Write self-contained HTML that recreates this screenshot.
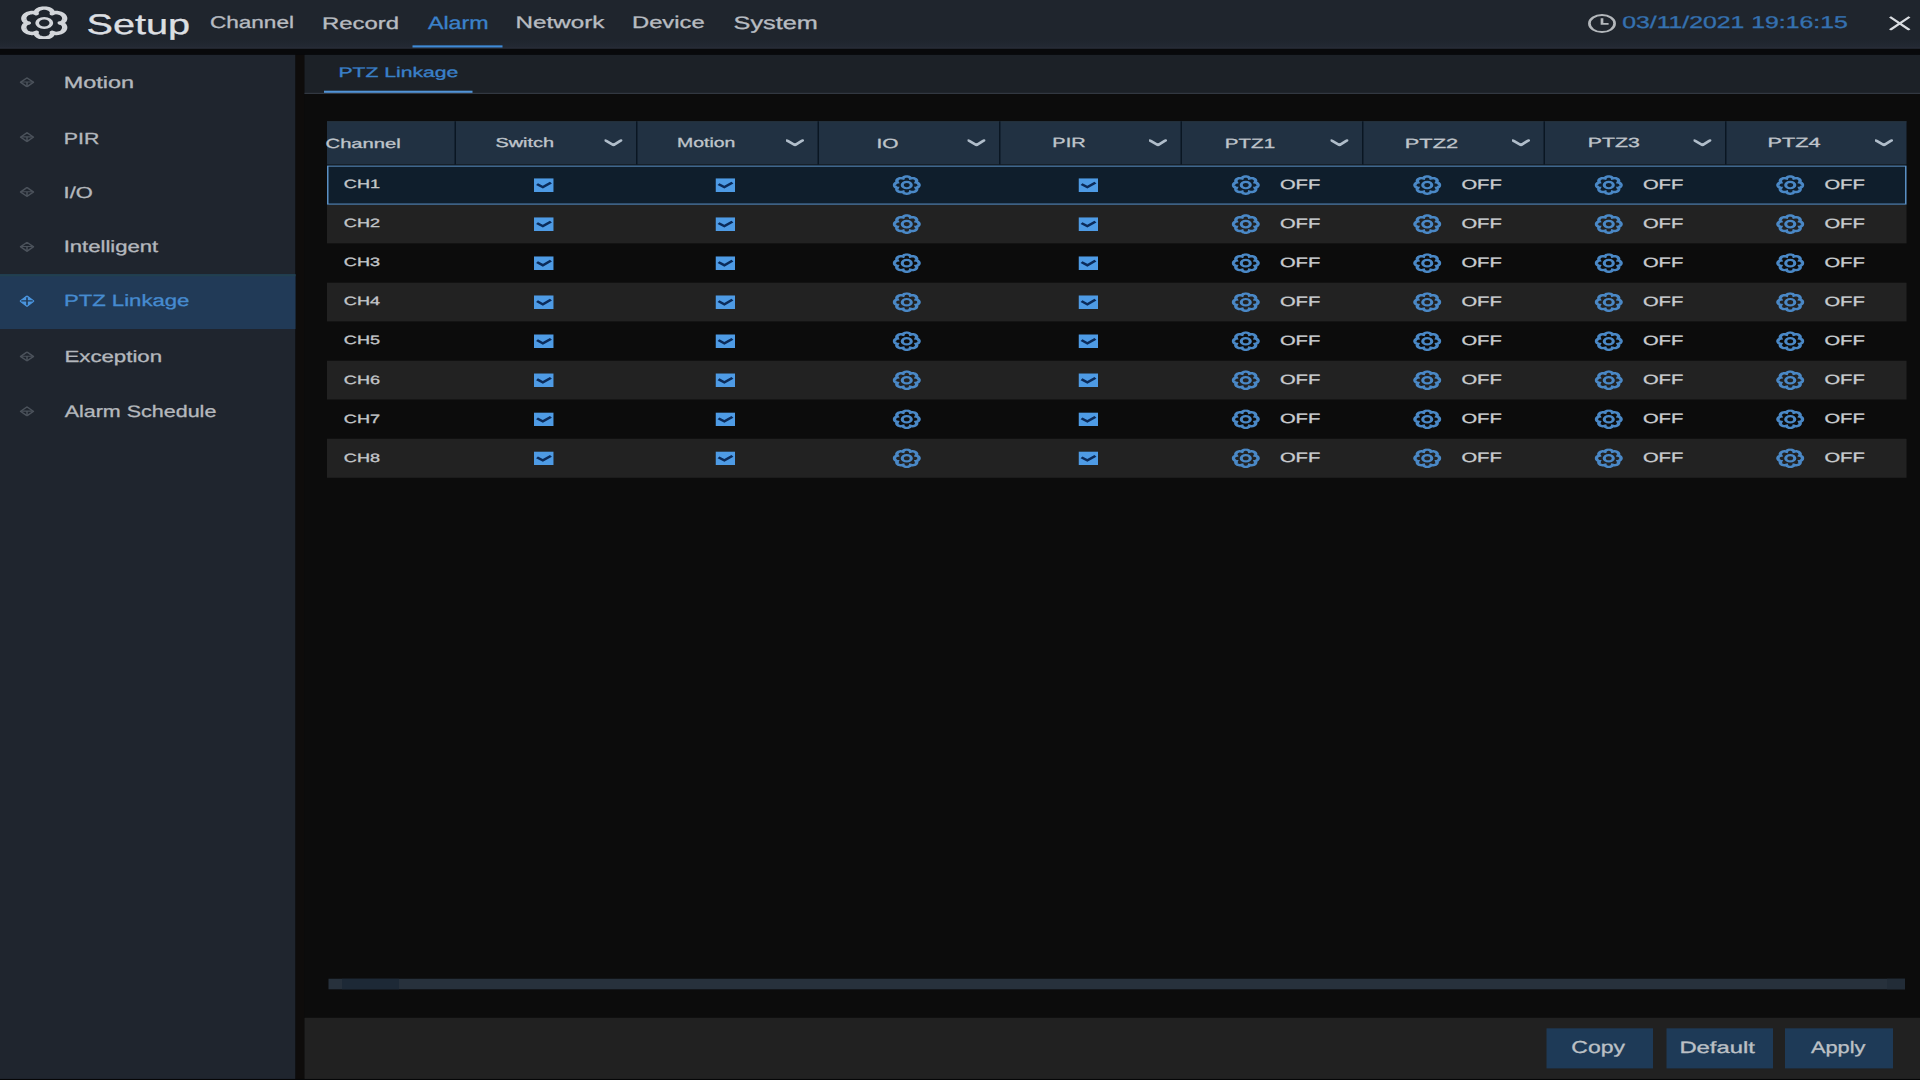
<!DOCTYPE html><html><head><meta charset="utf-8"><style>
html,body{margin:0;padding:0;width:1920px;height:1080px;overflow:hidden;background:#08090b;}
#root{position:absolute;left:0;top:0;width:1280px;height:1024px;transform:scale(1.5,1.0546875);transform-origin:0 0;font-family:"Liberation Sans",sans-serif;background:#08090b;overflow:hidden;}
.a{position:absolute;}
.t{position:absolute;white-space:nowrap;line-height:1;-webkit-text-stroke:0.3px currentColor;transform-origin:0 0;text-rendering:geometricPrecision;}
</style></head><body><svg width="0" height="0" style="position:absolute"><defs><path id="tg" d="M17.70,9.50 L17.69,9.79 L17.64,10.07 L17.57,10.35 L17.46,10.62 L17.33,10.88 L17.16,11.13 L16.97,11.36 L16.74,11.58 L16.48,11.77 L16.17,11.93 L15.74,12.02 L15.84,12.32 L15.99,12.67 L16.07,12.99 L16.10,13.31 L16.09,13.62 L16.05,13.91 L15.97,14.20 L15.87,14.47 L15.73,14.73 L15.58,14.97 L15.40,15.19 L15.19,15.40 L14.97,15.58 L14.73,15.73 L14.47,15.87 L14.20,15.97 L13.91,16.05 L13.62,16.09 L13.31,16.10 L12.99,16.07 L12.67,15.99 L12.32,15.84 L12.02,15.74 L11.93,16.17 L11.77,16.48 L11.58,16.74 L11.36,16.97 L11.13,17.16 L10.88,17.33 L10.62,17.46 L10.35,17.57 L10.07,17.64 L9.79,17.69 L9.50,17.70 L9.21,17.69 L8.93,17.64 L8.65,17.57 L8.38,17.46 L8.12,17.33 L7.87,17.16 L7.64,16.97 L7.42,16.74 L7.23,16.48 L7.07,16.17 L6.98,15.74 L6.68,15.84 L6.33,15.99 L6.01,16.07 L5.69,16.10 L5.38,16.09 L5.09,16.05 L4.80,15.97 L4.53,15.87 L4.27,15.73 L4.03,15.58 L3.81,15.40 L3.60,15.19 L3.42,14.97 L3.27,14.73 L3.13,14.47 L3.03,14.20 L2.95,13.91 L2.91,13.62 L2.90,13.31 L2.93,12.99 L3.01,12.67 L3.16,12.32 L3.26,12.02 L2.83,11.93 L2.52,11.77 L2.26,11.58 L2.03,11.36 L1.84,11.13 L1.67,10.88 L1.54,10.62 L1.43,10.35 L1.36,10.07 L1.31,9.79 L1.30,9.50 L1.31,9.21 L1.36,8.93 L1.43,8.65 L1.54,8.38 L1.67,8.12 L1.84,7.87 L2.03,7.64 L2.26,7.42 L2.52,7.23 L2.83,7.07 L3.26,6.98 L3.16,6.68 L3.01,6.33 L2.93,6.01 L2.90,5.69 L2.91,5.38 L2.95,5.09 L3.03,4.80 L3.13,4.53 L3.27,4.27 L3.42,4.03 L3.60,3.81 L3.81,3.60 L4.03,3.42 L4.27,3.27 L4.53,3.13 L4.80,3.03 L5.09,2.95 L5.38,2.91 L5.69,2.90 L6.01,2.93 L6.33,3.01 L6.68,3.16 L6.98,3.26 L7.07,2.83 L7.23,2.52 L7.42,2.26 L7.64,2.03 L7.87,1.84 L8.12,1.67 L8.38,1.54 L8.65,1.43 L8.93,1.36 L9.21,1.31 L9.50,1.30 L9.79,1.31 L10.07,1.36 L10.35,1.43 L10.62,1.54 L10.88,1.67 L11.13,1.84 L11.36,2.03 L11.58,2.26 L11.77,2.52 L11.93,2.83 L12.02,3.26 L12.32,3.16 L12.67,3.01 L12.99,2.93 L13.31,2.90 L13.62,2.91 L13.91,2.95 L14.20,3.03 L14.47,3.13 L14.73,3.27 L14.97,3.42 L15.19,3.60 L15.40,3.81 L15.58,4.03 L15.73,4.27 L15.87,4.53 L15.97,4.80 L16.05,5.09 L16.09,5.38 L16.10,5.69 L16.07,6.01 L15.99,6.33 L15.84,6.68 L15.74,6.98 L16.17,7.07 L16.48,7.23 L16.74,7.42 L16.97,7.64 L17.16,7.87 L17.33,8.12 L17.46,8.38 L17.57,8.65 L17.64,8.93 L17.69,9.21Z"/><path id="hg" d="M26.30,16.00 L27.35,16.40 L27.87,16.83 L28.26,17.29 L28.57,17.77 L28.81,18.26 L28.99,18.76 L29.12,19.27 L29.20,19.78 L29.23,20.30 L29.21,20.81 L29.15,21.31 L29.04,21.81 L28.89,22.29 L28.70,22.75 L28.47,23.20 L28.20,23.62 L27.89,24.02 L27.55,24.39 L27.18,24.73 L26.77,25.04 L26.34,25.31 L25.88,25.54 L25.39,25.73 L24.89,25.87 L24.36,25.96 L23.81,26.00 L23.25,25.97 L22.65,25.86 L22.02,25.63 L21.15,24.92 L21.33,26.03 L21.22,26.69 L21.01,27.26 L20.75,27.77 L20.45,28.22 L20.10,28.63 L19.73,29.00 L19.32,29.32 L18.89,29.61 L18.44,29.85 L17.97,30.05 L17.49,30.20 L17.00,30.31 L16.50,30.38 L16.00,30.40 L15.50,30.38 L15.00,30.31 L14.51,30.20 L14.03,30.05 L13.56,29.85 L13.11,29.61 L12.68,29.32 L12.27,29.00 L11.90,28.63 L11.55,28.22 L11.25,27.77 L10.99,27.26 L10.78,26.69 L10.67,26.03 L10.85,24.92 L9.98,25.63 L9.35,25.86 L8.75,25.97 L8.19,26.00 L7.64,25.96 L7.11,25.87 L6.61,25.73 L6.12,25.54 L5.66,25.31 L5.23,25.04 L4.82,24.73 L4.45,24.39 L4.11,24.02 L3.80,23.62 L3.53,23.20 L3.30,22.75 L3.11,22.29 L2.96,21.81 L2.85,21.31 L2.79,20.81 L2.77,20.30 L2.80,19.78 L2.88,19.27 L3.01,18.76 L3.19,18.26 L3.43,17.77 L3.74,17.29 L4.13,16.83 L4.65,16.40 L5.70,16.00 L4.65,15.60 L4.13,15.17 L3.74,14.71 L3.43,14.23 L3.19,13.74 L3.01,13.24 L2.88,12.73 L2.80,12.22 L2.77,11.70 L2.79,11.19 L2.85,10.69 L2.96,10.19 L3.11,9.71 L3.30,9.25 L3.53,8.80 L3.80,8.38 L4.11,7.98 L4.45,7.61 L4.82,7.27 L5.23,6.96 L5.66,6.69 L6.12,6.46 L6.61,6.27 L7.11,6.13 L7.64,6.04 L8.19,6.00 L8.75,6.03 L9.35,6.14 L9.98,6.37 L10.85,7.08 L10.67,5.97 L10.78,5.31 L10.99,4.74 L11.25,4.23 L11.55,3.78 L11.90,3.37 L12.27,3.00 L12.68,2.68 L13.11,2.39 L13.56,2.15 L14.03,1.95 L14.51,1.80 L15.00,1.69 L15.50,1.62 L16.00,1.60 L16.50,1.62 L17.00,1.69 L17.49,1.80 L17.97,1.95 L18.44,2.15 L18.89,2.39 L19.32,2.68 L19.73,3.00 L20.10,3.37 L20.45,3.78 L20.75,4.23 L21.01,4.74 L21.22,5.31 L21.33,5.97 L21.15,7.08 L22.02,6.37 L22.65,6.14 L23.25,6.03 L23.81,6.00 L24.36,6.04 L24.89,6.13 L25.39,6.27 L25.88,6.46 L26.34,6.69 L26.77,6.96 L27.18,7.27 L27.55,7.61 L27.89,7.98 L28.20,8.38 L28.47,8.80 L28.70,9.25 L28.89,9.71 L29.04,10.19 L29.15,10.69 L29.21,11.19 L29.23,11.70 L29.20,12.22 L29.12,12.73 L28.99,13.24 L28.81,13.74 L28.57,14.23 L28.26,14.71 L27.87,15.17 L27.35,15.60Z"/></defs></svg><div id="root">
<div class="a" style="left:0;top:0;width:1280px;height:46px;background:linear-gradient(#1f252d 0%,#1f252d 80%,#232934 100%)"></div>
<div class="a" style="left:0;top:44.6px;width:1280px;height:1.2px;background:#2b2f3a"></div>
<svg class="a" style="left:12.9px;top:5.9px" width="33" height="31.6" viewBox="0 0 32 32" preserveAspectRatio="none"><use href="#hg" fill="none" stroke="#d3d6da" stroke-width="3.4" stroke-linejoin="round"/><circle cx="16" cy="16" r="4.6" fill="none" stroke="#d3d6da" stroke-width="2.4"/></svg>
<div class="a" style="left:275px;top:42.5px;width:59.5px;height:2.6px;background:#3f8bd8"></div>
<svg class="a" style="left:1058px;top:13px" width="20" height="19" viewBox="0 0 20 19"><ellipse cx="10" cy="9.3" rx="8.4" ry="8.1" fill="none" stroke="#b3b7bb" stroke-width="1.8"/><path d="M10 4.3 V9.6 H14.4" fill="none" stroke="#b3b7bb" stroke-width="1.8"/></svg>
<svg class="a" style="left:1259px;top:14.5px" width="15" height="14.5" viewBox="0 0 15 14.5"><path d="M1 1 L14 13.5 M14 1 L1 13.5" stroke="#d9dce0" stroke-width="1.9"/></svg>
<div class="a" style="left:0;top:52px;width:197px;height:972px;background:#1f252e"></div>
<div class="a" style="left:197px;top:52px;width:5.7px;height:972px;background:#0e0c0b"></div>
<svg class="a" style="left:12.5px;top:72.5px" width="10" height="10" viewBox="0 0 10 10"><path d="M5 0.8 L9.3 5 L5 9.2 L0.7 5Z" fill="none" stroke="#4b525b" stroke-width="1.2" stroke-linejoin="round"/><path d="M1.2 4.8 H8.8 M5 4.8 V8.8" stroke="#4b525b" stroke-width="1"/></svg>
<svg class="a" style="left:12.5px;top:124.5px" width="10" height="10" viewBox="0 0 10 10"><path d="M5 0.8 L9.3 5 L5 9.2 L0.7 5Z" fill="none" stroke="#4b525b" stroke-width="1.2" stroke-linejoin="round"/><path d="M1.2 4.8 H8.8 M5 4.8 V8.8" stroke="#4b525b" stroke-width="1"/></svg>
<svg class="a" style="left:12.5px;top:176.5px" width="10" height="10" viewBox="0 0 10 10"><path d="M5 0.8 L9.3 5 L5 9.2 L0.7 5Z" fill="none" stroke="#4b525b" stroke-width="1.2" stroke-linejoin="round"/><path d="M1.2 4.8 H8.8 M5 4.8 V8.8" stroke="#4b525b" stroke-width="1"/></svg>
<svg class="a" style="left:12.5px;top:228.5px" width="10" height="10" viewBox="0 0 10 10"><path d="M5 0.8 L9.3 5 L5 9.2 L0.7 5Z" fill="none" stroke="#4b525b" stroke-width="1.2" stroke-linejoin="round"/><path d="M1.2 4.8 H8.8 M5 4.8 V8.8" stroke="#4b525b" stroke-width="1"/></svg>
<div class="a" style="left:0;top:260px;width:197px;height:52px;background:#213a57"></div>
<div class="a" style="left:0;top:260px;width:197px;height:1.5px;background:#22404f"></div>
<svg class="a" style="left:12.9px;top:279.5px" width="10" height="11" viewBox="0 0 10 11"><path d="M5 0.5 L9.6 5.5 L5 10.5 L0.4 5.5Z" fill="#4a95df" stroke="#4a95df" stroke-width="0.8" stroke-linejoin="round"/><path d="M1.2 5.2 H8.8 M5 1.8 V9.5" stroke="#213a57" stroke-width="1.1"/></svg>
<svg class="a" style="left:12.5px;top:332.5px" width="10" height="10" viewBox="0 0 10 10"><path d="M5 0.8 L9.3 5 L5 9.2 L0.7 5Z" fill="none" stroke="#4b525b" stroke-width="1.2" stroke-linejoin="round"/><path d="M1.2 4.8 H8.8 M5 4.8 V8.8" stroke="#4b525b" stroke-width="1"/></svg>
<svg class="a" style="left:12.5px;top:384.5px" width="10" height="10" viewBox="0 0 10 10"><path d="M5 0.8 L9.3 5 L5 9.2 L0.7 5Z" fill="none" stroke="#4b525b" stroke-width="1.2" stroke-linejoin="round"/><path d="M1.2 4.8 H8.8 M5 4.8 V8.8" stroke="#4b525b" stroke-width="1"/></svg>
<div class="a" style="left:202.7px;top:52px;width:1077.3px;height:972px;background:#0c0c0c"></div>
<div class="a" style="left:202.7px;top:52px;width:1077.3px;height:36.5px;background:#1c2127"></div>
<div class="a" style="left:202.7px;top:87.9px;width:1077.3px;height:1.3px;background:#363d47"></div>
<div class="a" style="left:216px;top:85.8px;width:98.8px;height:2.4px;background:#5294d6"></div>
<div class="a" style="left:218px;top:114.6px;width:1053.3px;height:41.9px;background:#213142"></div>
<div class="a" style="left:218px;top:114.6px;width:1053.3px;height:1.2px;background:#263440"></div>
<div class="a" style="left:302.6px;top:114.6px;width:1.3px;height:41.9px;background:#0a1622"></div>
<svg class="a" style="left:402.9px;top:132.2px" width="12" height="7" viewBox="0 0 12 7"><path d="M0.6 1.1 L6.0 5.6 L11.0 1.0" fill="none" stroke="#b0bdca" stroke-width="2.3" stroke-linejoin="round" stroke-linecap="round"/></svg>
<div class="a" style="left:423.6px;top:114.6px;width:1.3px;height:41.9px;background:#0a1622"></div>
<svg class="a" style="left:523.9px;top:132.2px" width="12" height="7" viewBox="0 0 12 7"><path d="M0.6 1.1 L6.0 5.6 L11.0 1.0" fill="none" stroke="#b0bdca" stroke-width="2.3" stroke-linejoin="round" stroke-linecap="round"/></svg>
<div class="a" style="left:544.6px;top:114.6px;width:1.3px;height:41.9px;background:#0a1622"></div>
<svg class="a" style="left:644.9px;top:132.2px" width="12" height="7" viewBox="0 0 12 7"><path d="M0.6 1.1 L6.0 5.6 L11.0 1.0" fill="none" stroke="#b0bdca" stroke-width="2.3" stroke-linejoin="round" stroke-linecap="round"/></svg>
<div class="a" style="left:665.6px;top:114.6px;width:1.3px;height:41.9px;background:#0a1622"></div>
<svg class="a" style="left:765.9px;top:132.2px" width="12" height="7" viewBox="0 0 12 7"><path d="M0.6 1.1 L6.0 5.6 L11.0 1.0" fill="none" stroke="#b0bdca" stroke-width="2.3" stroke-linejoin="round" stroke-linecap="round"/></svg>
<div class="a" style="left:786.6px;top:114.6px;width:1.3px;height:41.9px;background:#0a1622"></div>
<svg class="a" style="left:886.9px;top:132.2px" width="12" height="7" viewBox="0 0 12 7"><path d="M0.6 1.1 L6.0 5.6 L11.0 1.0" fill="none" stroke="#b0bdca" stroke-width="2.3" stroke-linejoin="round" stroke-linecap="round"/></svg>
<div class="a" style="left:907.6px;top:114.6px;width:1.3px;height:41.9px;background:#0a1622"></div>
<svg class="a" style="left:1007.9px;top:132.2px" width="12" height="7" viewBox="0 0 12 7"><path d="M0.6 1.1 L6.0 5.6 L11.0 1.0" fill="none" stroke="#b0bdca" stroke-width="2.3" stroke-linejoin="round" stroke-linecap="round"/></svg>
<div class="a" style="left:1028.6px;top:114.6px;width:1.3px;height:41.9px;background:#0a1622"></div>
<svg class="a" style="left:1128.9px;top:132.2px" width="12" height="7" viewBox="0 0 12 7"><path d="M0.6 1.1 L6.0 5.6 L11.0 1.0" fill="none" stroke="#b0bdca" stroke-width="2.3" stroke-linejoin="round" stroke-linecap="round"/></svg>
<div class="a" style="left:1149.6px;top:114.6px;width:1.3px;height:41.9px;background:#0a1622"></div>
<svg class="a" style="left:1249.9px;top:132.2px" width="12" height="7" viewBox="0 0 12 7"><path d="M0.6 1.1 L6.0 5.6 L11.0 1.0" fill="none" stroke="#b0bdca" stroke-width="2.3" stroke-linejoin="round" stroke-linecap="round"/></svg>
<div class="a" style="left:218px;top:156.5px;width:1053.3px;height:37px;background:#0f1e2c"></div>
<svg class="a" style="left:356.1px;top:168.8px" width="13.3" height="13.2" viewBox="0 0 13.3 13.2"><rect width="13.3" height="13.2" fill="#4e9be5"/><path d="M2.0 5.6 L5.9 8.5 L11.3 4.2" fill="none" stroke="#0b2b5a" stroke-width="2.1"/></svg>
<svg class="a" style="left:477.1px;top:168.8px" width="13.3" height="13.2" viewBox="0 0 13.3 13.2"><rect width="13.3" height="13.2" fill="#4e9be5"/><path d="M2.0 5.6 L5.9 8.5 L11.3 4.2" fill="none" stroke="#0b2b5a" stroke-width="2.1"/></svg>
<svg class="a" style="left:595.3px;top:166.0px" width="19" height="19" viewBox="0 0 19 19"><use href="#tg" fill="none" stroke="#4a88c6" stroke-width="2.3"/><circle cx="9.5" cy="9.5" r="3.0" fill="none" stroke="#4a88c6" stroke-width="2.1"/></svg>
<svg class="a" style="left:719.1px;top:168.8px" width="13.3" height="13.2" viewBox="0 0 13.3 13.2"><rect width="13.3" height="13.2" fill="#4e9be5"/><path d="M2.0 5.6 L5.9 8.5 L11.3 4.2" fill="none" stroke="#0b2b5a" stroke-width="2.1"/></svg>
<svg class="a" style="left:821.4px;top:166.0px" width="19" height="19" viewBox="0 0 19 19"><use href="#tg" fill="none" stroke="#4a88c6" stroke-width="2.3"/><circle cx="9.5" cy="9.5" r="3.0" fill="none" stroke="#4a88c6" stroke-width="2.1"/></svg>
<svg class="a" style="left:942.4px;top:166.0px" width="19" height="19" viewBox="0 0 19 19"><use href="#tg" fill="none" stroke="#4a88c6" stroke-width="2.3"/><circle cx="9.5" cy="9.5" r="3.0" fill="none" stroke="#4a88c6" stroke-width="2.1"/></svg>
<svg class="a" style="left:1063.4px;top:166.0px" width="19" height="19" viewBox="0 0 19 19"><use href="#tg" fill="none" stroke="#4a88c6" stroke-width="2.3"/><circle cx="9.5" cy="9.5" r="3.0" fill="none" stroke="#4a88c6" stroke-width="2.1"/></svg>
<svg class="a" style="left:1184.4px;top:166.0px" width="19" height="19" viewBox="0 0 19 19"><use href="#tg" fill="none" stroke="#4a88c6" stroke-width="2.3"/><circle cx="9.5" cy="9.5" r="3.0" fill="none" stroke="#4a88c6" stroke-width="2.1"/></svg>
<div class="a" style="left:218px;top:193.5px;width:1053.3px;height:37px;background:#222222"></div>
<svg class="a" style="left:356.1px;top:205.8px" width="13.3" height="13.2" viewBox="0 0 13.3 13.2"><rect width="13.3" height="13.2" fill="#4e9be5"/><path d="M2.0 5.6 L5.9 8.5 L11.3 4.2" fill="none" stroke="#0b2b5a" stroke-width="2.1"/></svg>
<svg class="a" style="left:477.1px;top:205.8px" width="13.3" height="13.2" viewBox="0 0 13.3 13.2"><rect width="13.3" height="13.2" fill="#4e9be5"/><path d="M2.0 5.6 L5.9 8.5 L11.3 4.2" fill="none" stroke="#0b2b5a" stroke-width="2.1"/></svg>
<svg class="a" style="left:595.3px;top:203.0px" width="19" height="19" viewBox="0 0 19 19"><use href="#tg" fill="none" stroke="#4a88c6" stroke-width="2.3"/><circle cx="9.5" cy="9.5" r="3.0" fill="none" stroke="#4a88c6" stroke-width="2.1"/></svg>
<svg class="a" style="left:719.1px;top:205.8px" width="13.3" height="13.2" viewBox="0 0 13.3 13.2"><rect width="13.3" height="13.2" fill="#4e9be5"/><path d="M2.0 5.6 L5.9 8.5 L11.3 4.2" fill="none" stroke="#0b2b5a" stroke-width="2.1"/></svg>
<svg class="a" style="left:821.4px;top:203.0px" width="19" height="19" viewBox="0 0 19 19"><use href="#tg" fill="none" stroke="#4a88c6" stroke-width="2.3"/><circle cx="9.5" cy="9.5" r="3.0" fill="none" stroke="#4a88c6" stroke-width="2.1"/></svg>
<svg class="a" style="left:942.4px;top:203.0px" width="19" height="19" viewBox="0 0 19 19"><use href="#tg" fill="none" stroke="#4a88c6" stroke-width="2.3"/><circle cx="9.5" cy="9.5" r="3.0" fill="none" stroke="#4a88c6" stroke-width="2.1"/></svg>
<svg class="a" style="left:1063.4px;top:203.0px" width="19" height="19" viewBox="0 0 19 19"><use href="#tg" fill="none" stroke="#4a88c6" stroke-width="2.3"/><circle cx="9.5" cy="9.5" r="3.0" fill="none" stroke="#4a88c6" stroke-width="2.1"/></svg>
<svg class="a" style="left:1184.4px;top:203.0px" width="19" height="19" viewBox="0 0 19 19"><use href="#tg" fill="none" stroke="#4a88c6" stroke-width="2.3"/><circle cx="9.5" cy="9.5" r="3.0" fill="none" stroke="#4a88c6" stroke-width="2.1"/></svg>
<div class="a" style="left:218px;top:230.5px;width:1053.3px;height:37px;background:#0c0c0c"></div>
<svg class="a" style="left:356.1px;top:242.8px" width="13.3" height="13.2" viewBox="0 0 13.3 13.2"><rect width="13.3" height="13.2" fill="#4e9be5"/><path d="M2.0 5.6 L5.9 8.5 L11.3 4.2" fill="none" stroke="#0b2b5a" stroke-width="2.1"/></svg>
<svg class="a" style="left:477.1px;top:242.8px" width="13.3" height="13.2" viewBox="0 0 13.3 13.2"><rect width="13.3" height="13.2" fill="#4e9be5"/><path d="M2.0 5.6 L5.9 8.5 L11.3 4.2" fill="none" stroke="#0b2b5a" stroke-width="2.1"/></svg>
<svg class="a" style="left:595.3px;top:240.0px" width="19" height="19" viewBox="0 0 19 19"><use href="#tg" fill="none" stroke="#4a88c6" stroke-width="2.3"/><circle cx="9.5" cy="9.5" r="3.0" fill="none" stroke="#4a88c6" stroke-width="2.1"/></svg>
<svg class="a" style="left:719.1px;top:242.8px" width="13.3" height="13.2" viewBox="0 0 13.3 13.2"><rect width="13.3" height="13.2" fill="#4e9be5"/><path d="M2.0 5.6 L5.9 8.5 L11.3 4.2" fill="none" stroke="#0b2b5a" stroke-width="2.1"/></svg>
<svg class="a" style="left:821.4px;top:240.0px" width="19" height="19" viewBox="0 0 19 19"><use href="#tg" fill="none" stroke="#4a88c6" stroke-width="2.3"/><circle cx="9.5" cy="9.5" r="3.0" fill="none" stroke="#4a88c6" stroke-width="2.1"/></svg>
<svg class="a" style="left:942.4px;top:240.0px" width="19" height="19" viewBox="0 0 19 19"><use href="#tg" fill="none" stroke="#4a88c6" stroke-width="2.3"/><circle cx="9.5" cy="9.5" r="3.0" fill="none" stroke="#4a88c6" stroke-width="2.1"/></svg>
<svg class="a" style="left:1063.4px;top:240.0px" width="19" height="19" viewBox="0 0 19 19"><use href="#tg" fill="none" stroke="#4a88c6" stroke-width="2.3"/><circle cx="9.5" cy="9.5" r="3.0" fill="none" stroke="#4a88c6" stroke-width="2.1"/></svg>
<svg class="a" style="left:1184.4px;top:240.0px" width="19" height="19" viewBox="0 0 19 19"><use href="#tg" fill="none" stroke="#4a88c6" stroke-width="2.3"/><circle cx="9.5" cy="9.5" r="3.0" fill="none" stroke="#4a88c6" stroke-width="2.1"/></svg>
<div class="a" style="left:218px;top:267.5px;width:1053.3px;height:37px;background:#222222"></div>
<svg class="a" style="left:356.1px;top:279.8px" width="13.3" height="13.2" viewBox="0 0 13.3 13.2"><rect width="13.3" height="13.2" fill="#4e9be5"/><path d="M2.0 5.6 L5.9 8.5 L11.3 4.2" fill="none" stroke="#0b2b5a" stroke-width="2.1"/></svg>
<svg class="a" style="left:477.1px;top:279.8px" width="13.3" height="13.2" viewBox="0 0 13.3 13.2"><rect width="13.3" height="13.2" fill="#4e9be5"/><path d="M2.0 5.6 L5.9 8.5 L11.3 4.2" fill="none" stroke="#0b2b5a" stroke-width="2.1"/></svg>
<svg class="a" style="left:595.3px;top:277.0px" width="19" height="19" viewBox="0 0 19 19"><use href="#tg" fill="none" stroke="#4a88c6" stroke-width="2.3"/><circle cx="9.5" cy="9.5" r="3.0" fill="none" stroke="#4a88c6" stroke-width="2.1"/></svg>
<svg class="a" style="left:719.1px;top:279.8px" width="13.3" height="13.2" viewBox="0 0 13.3 13.2"><rect width="13.3" height="13.2" fill="#4e9be5"/><path d="M2.0 5.6 L5.9 8.5 L11.3 4.2" fill="none" stroke="#0b2b5a" stroke-width="2.1"/></svg>
<svg class="a" style="left:821.4px;top:277.0px" width="19" height="19" viewBox="0 0 19 19"><use href="#tg" fill="none" stroke="#4a88c6" stroke-width="2.3"/><circle cx="9.5" cy="9.5" r="3.0" fill="none" stroke="#4a88c6" stroke-width="2.1"/></svg>
<svg class="a" style="left:942.4px;top:277.0px" width="19" height="19" viewBox="0 0 19 19"><use href="#tg" fill="none" stroke="#4a88c6" stroke-width="2.3"/><circle cx="9.5" cy="9.5" r="3.0" fill="none" stroke="#4a88c6" stroke-width="2.1"/></svg>
<svg class="a" style="left:1063.4px;top:277.0px" width="19" height="19" viewBox="0 0 19 19"><use href="#tg" fill="none" stroke="#4a88c6" stroke-width="2.3"/><circle cx="9.5" cy="9.5" r="3.0" fill="none" stroke="#4a88c6" stroke-width="2.1"/></svg>
<svg class="a" style="left:1184.4px;top:277.0px" width="19" height="19" viewBox="0 0 19 19"><use href="#tg" fill="none" stroke="#4a88c6" stroke-width="2.3"/><circle cx="9.5" cy="9.5" r="3.0" fill="none" stroke="#4a88c6" stroke-width="2.1"/></svg>
<div class="a" style="left:218px;top:304.5px;width:1053.3px;height:37px;background:#0c0c0c"></div>
<svg class="a" style="left:356.1px;top:316.8px" width="13.3" height="13.2" viewBox="0 0 13.3 13.2"><rect width="13.3" height="13.2" fill="#4e9be5"/><path d="M2.0 5.6 L5.9 8.5 L11.3 4.2" fill="none" stroke="#0b2b5a" stroke-width="2.1"/></svg>
<svg class="a" style="left:477.1px;top:316.8px" width="13.3" height="13.2" viewBox="0 0 13.3 13.2"><rect width="13.3" height="13.2" fill="#4e9be5"/><path d="M2.0 5.6 L5.9 8.5 L11.3 4.2" fill="none" stroke="#0b2b5a" stroke-width="2.1"/></svg>
<svg class="a" style="left:595.3px;top:314.0px" width="19" height="19" viewBox="0 0 19 19"><use href="#tg" fill="none" stroke="#4a88c6" stroke-width="2.3"/><circle cx="9.5" cy="9.5" r="3.0" fill="none" stroke="#4a88c6" stroke-width="2.1"/></svg>
<svg class="a" style="left:719.1px;top:316.8px" width="13.3" height="13.2" viewBox="0 0 13.3 13.2"><rect width="13.3" height="13.2" fill="#4e9be5"/><path d="M2.0 5.6 L5.9 8.5 L11.3 4.2" fill="none" stroke="#0b2b5a" stroke-width="2.1"/></svg>
<svg class="a" style="left:821.4px;top:314.0px" width="19" height="19" viewBox="0 0 19 19"><use href="#tg" fill="none" stroke="#4a88c6" stroke-width="2.3"/><circle cx="9.5" cy="9.5" r="3.0" fill="none" stroke="#4a88c6" stroke-width="2.1"/></svg>
<svg class="a" style="left:942.4px;top:314.0px" width="19" height="19" viewBox="0 0 19 19"><use href="#tg" fill="none" stroke="#4a88c6" stroke-width="2.3"/><circle cx="9.5" cy="9.5" r="3.0" fill="none" stroke="#4a88c6" stroke-width="2.1"/></svg>
<svg class="a" style="left:1063.4px;top:314.0px" width="19" height="19" viewBox="0 0 19 19"><use href="#tg" fill="none" stroke="#4a88c6" stroke-width="2.3"/><circle cx="9.5" cy="9.5" r="3.0" fill="none" stroke="#4a88c6" stroke-width="2.1"/></svg>
<svg class="a" style="left:1184.4px;top:314.0px" width="19" height="19" viewBox="0 0 19 19"><use href="#tg" fill="none" stroke="#4a88c6" stroke-width="2.3"/><circle cx="9.5" cy="9.5" r="3.0" fill="none" stroke="#4a88c6" stroke-width="2.1"/></svg>
<div class="a" style="left:218px;top:341.5px;width:1053.3px;height:37px;background:#222222"></div>
<svg class="a" style="left:356.1px;top:353.8px" width="13.3" height="13.2" viewBox="0 0 13.3 13.2"><rect width="13.3" height="13.2" fill="#4e9be5"/><path d="M2.0 5.6 L5.9 8.5 L11.3 4.2" fill="none" stroke="#0b2b5a" stroke-width="2.1"/></svg>
<svg class="a" style="left:477.1px;top:353.8px" width="13.3" height="13.2" viewBox="0 0 13.3 13.2"><rect width="13.3" height="13.2" fill="#4e9be5"/><path d="M2.0 5.6 L5.9 8.5 L11.3 4.2" fill="none" stroke="#0b2b5a" stroke-width="2.1"/></svg>
<svg class="a" style="left:595.3px;top:351.0px" width="19" height="19" viewBox="0 0 19 19"><use href="#tg" fill="none" stroke="#4a88c6" stroke-width="2.3"/><circle cx="9.5" cy="9.5" r="3.0" fill="none" stroke="#4a88c6" stroke-width="2.1"/></svg>
<svg class="a" style="left:719.1px;top:353.8px" width="13.3" height="13.2" viewBox="0 0 13.3 13.2"><rect width="13.3" height="13.2" fill="#4e9be5"/><path d="M2.0 5.6 L5.9 8.5 L11.3 4.2" fill="none" stroke="#0b2b5a" stroke-width="2.1"/></svg>
<svg class="a" style="left:821.4px;top:351.0px" width="19" height="19" viewBox="0 0 19 19"><use href="#tg" fill="none" stroke="#4a88c6" stroke-width="2.3"/><circle cx="9.5" cy="9.5" r="3.0" fill="none" stroke="#4a88c6" stroke-width="2.1"/></svg>
<svg class="a" style="left:942.4px;top:351.0px" width="19" height="19" viewBox="0 0 19 19"><use href="#tg" fill="none" stroke="#4a88c6" stroke-width="2.3"/><circle cx="9.5" cy="9.5" r="3.0" fill="none" stroke="#4a88c6" stroke-width="2.1"/></svg>
<svg class="a" style="left:1063.4px;top:351.0px" width="19" height="19" viewBox="0 0 19 19"><use href="#tg" fill="none" stroke="#4a88c6" stroke-width="2.3"/><circle cx="9.5" cy="9.5" r="3.0" fill="none" stroke="#4a88c6" stroke-width="2.1"/></svg>
<svg class="a" style="left:1184.4px;top:351.0px" width="19" height="19" viewBox="0 0 19 19"><use href="#tg" fill="none" stroke="#4a88c6" stroke-width="2.3"/><circle cx="9.5" cy="9.5" r="3.0" fill="none" stroke="#4a88c6" stroke-width="2.1"/></svg>
<div class="a" style="left:218px;top:378.5px;width:1053.3px;height:37px;background:#0c0c0c"></div>
<svg class="a" style="left:356.1px;top:390.8px" width="13.3" height="13.2" viewBox="0 0 13.3 13.2"><rect width="13.3" height="13.2" fill="#4e9be5"/><path d="M2.0 5.6 L5.9 8.5 L11.3 4.2" fill="none" stroke="#0b2b5a" stroke-width="2.1"/></svg>
<svg class="a" style="left:477.1px;top:390.8px" width="13.3" height="13.2" viewBox="0 0 13.3 13.2"><rect width="13.3" height="13.2" fill="#4e9be5"/><path d="M2.0 5.6 L5.9 8.5 L11.3 4.2" fill="none" stroke="#0b2b5a" stroke-width="2.1"/></svg>
<svg class="a" style="left:595.3px;top:388.0px" width="19" height="19" viewBox="0 0 19 19"><use href="#tg" fill="none" stroke="#4a88c6" stroke-width="2.3"/><circle cx="9.5" cy="9.5" r="3.0" fill="none" stroke="#4a88c6" stroke-width="2.1"/></svg>
<svg class="a" style="left:719.1px;top:390.8px" width="13.3" height="13.2" viewBox="0 0 13.3 13.2"><rect width="13.3" height="13.2" fill="#4e9be5"/><path d="M2.0 5.6 L5.9 8.5 L11.3 4.2" fill="none" stroke="#0b2b5a" stroke-width="2.1"/></svg>
<svg class="a" style="left:821.4px;top:388.0px" width="19" height="19" viewBox="0 0 19 19"><use href="#tg" fill="none" stroke="#4a88c6" stroke-width="2.3"/><circle cx="9.5" cy="9.5" r="3.0" fill="none" stroke="#4a88c6" stroke-width="2.1"/></svg>
<svg class="a" style="left:942.4px;top:388.0px" width="19" height="19" viewBox="0 0 19 19"><use href="#tg" fill="none" stroke="#4a88c6" stroke-width="2.3"/><circle cx="9.5" cy="9.5" r="3.0" fill="none" stroke="#4a88c6" stroke-width="2.1"/></svg>
<svg class="a" style="left:1063.4px;top:388.0px" width="19" height="19" viewBox="0 0 19 19"><use href="#tg" fill="none" stroke="#4a88c6" stroke-width="2.3"/><circle cx="9.5" cy="9.5" r="3.0" fill="none" stroke="#4a88c6" stroke-width="2.1"/></svg>
<svg class="a" style="left:1184.4px;top:388.0px" width="19" height="19" viewBox="0 0 19 19"><use href="#tg" fill="none" stroke="#4a88c6" stroke-width="2.3"/><circle cx="9.5" cy="9.5" r="3.0" fill="none" stroke="#4a88c6" stroke-width="2.1"/></svg>
<div class="a" style="left:218px;top:415.5px;width:1053.3px;height:37px;background:#222222"></div>
<svg class="a" style="left:356.1px;top:427.8px" width="13.3" height="13.2" viewBox="0 0 13.3 13.2"><rect width="13.3" height="13.2" fill="#4e9be5"/><path d="M2.0 5.6 L5.9 8.5 L11.3 4.2" fill="none" stroke="#0b2b5a" stroke-width="2.1"/></svg>
<svg class="a" style="left:477.1px;top:427.8px" width="13.3" height="13.2" viewBox="0 0 13.3 13.2"><rect width="13.3" height="13.2" fill="#4e9be5"/><path d="M2.0 5.6 L5.9 8.5 L11.3 4.2" fill="none" stroke="#0b2b5a" stroke-width="2.1"/></svg>
<svg class="a" style="left:595.3px;top:425.0px" width="19" height="19" viewBox="0 0 19 19"><use href="#tg" fill="none" stroke="#4a88c6" stroke-width="2.3"/><circle cx="9.5" cy="9.5" r="3.0" fill="none" stroke="#4a88c6" stroke-width="2.1"/></svg>
<svg class="a" style="left:719.1px;top:427.8px" width="13.3" height="13.2" viewBox="0 0 13.3 13.2"><rect width="13.3" height="13.2" fill="#4e9be5"/><path d="M2.0 5.6 L5.9 8.5 L11.3 4.2" fill="none" stroke="#0b2b5a" stroke-width="2.1"/></svg>
<svg class="a" style="left:821.4px;top:425.0px" width="19" height="19" viewBox="0 0 19 19"><use href="#tg" fill="none" stroke="#4a88c6" stroke-width="2.3"/><circle cx="9.5" cy="9.5" r="3.0" fill="none" stroke="#4a88c6" stroke-width="2.1"/></svg>
<svg class="a" style="left:942.4px;top:425.0px" width="19" height="19" viewBox="0 0 19 19"><use href="#tg" fill="none" stroke="#4a88c6" stroke-width="2.3"/><circle cx="9.5" cy="9.5" r="3.0" fill="none" stroke="#4a88c6" stroke-width="2.1"/></svg>
<svg class="a" style="left:1063.4px;top:425.0px" width="19" height="19" viewBox="0 0 19 19"><use href="#tg" fill="none" stroke="#4a88c6" stroke-width="2.3"/><circle cx="9.5" cy="9.5" r="3.0" fill="none" stroke="#4a88c6" stroke-width="2.1"/></svg>
<svg class="a" style="left:1184.4px;top:425.0px" width="19" height="19" viewBox="0 0 19 19"><use href="#tg" fill="none" stroke="#4a88c6" stroke-width="2.3"/><circle cx="9.5" cy="9.5" r="3.0" fill="none" stroke="#4a88c6" stroke-width="2.1"/></svg>
<div class="a" style="left:218px;top:156.5px;width:1053.3px;height:37px;box-sizing:border-box;border-style:solid;border-color:#5a8fc3;border-width:1.8px 1.4px 1.9px 1.4px"></div>
<div class="a" style="left:218.9px;top:927.6px;width:1051px;height:10.5px;background:#27313c"></div>
<div class="a" style="left:228px;top:927.6px;width:37.5px;height:10.5px;background:#1d2936"></div>
<div class="a" style="left:1258px;top:927.6px;width:12px;height:10.5px;background:#222c37"></div>
<div class="a" style="left:202.7px;top:965px;width:1077.3px;height:59px;background:#212121"></div>
<div class="a" style="left:1030.8px;top:974.7px;width:71.6px;height:37.9px;background:#1e3a57"></div>
<div class="a" style="left:1110.5px;top:974.7px;width:71.6px;height:37.9px;background:#1e3a57"></div>
<div class="a" style="left:1190.3px;top:974.7px;width:71.6px;height:37.9px;background:#1e3a57"></div>
<div class="a" style="left:0;top:1022.8px;width:1280px;height:1.2px;background:#050607"></div>
<div class="t" style="left:57px;top:10px;transform:translate(0.704px,0.425px) scaleX(0.9862);font-size:26.806px;color:#dcdfe2">Setup</div>
<div class="t" style="left:139px;top:14px;transform:translate(0.918px,0.651px) scaleX(0.9441);font-size:15.95px;color:#b8bcc1">Channel</div>
<div class="t" style="left:214px;top:14px;transform:translate(0.636px,0.359px) scaleX(0.9938);font-size:16.032px;color:#b8bcc1">Record</div>
<div class="t" style="left:285px;top:13px;transform:translate(0.292px,0.561px) scaleX(0.9104);font-size:17.014px;color:#3b82cb">Alarm</div>
<div class="t" style="left:343px;top:14px;transform:translate(0.707px,0.658px) scaleX(1.0080);font-size:16.003px;color:#b8bcc1">Network</div>
<div class="t" style="left:421px;top:14px;transform:translate(0.310px,0.322px) scaleX(0.9906);font-size:16.019px;color:#b8bcc1">Device</div>
<div class="t" style="left:489px;top:13px;transform:translate(0.076px,0.123px) scaleX(0.9842);font-size:17.107px;color:#b8bcc1">System</div>
<div class="t" style="left:1081px;top:13px;transform:translate(0.450px,0.161px) scaleX(1.0249);font-size:16.149px;color:#3571b0">03/11/2021 19:16:15</div>
<div class="t" style="left:42px;top:71px;transform:translate(0.463px,0.826px) scaleX(1.0157);font-size:15.383px;color:#b4b8bd">Motion</div>
<div class="t" style="left:42px;top:124px;transform:translate(0.566px,0.066px) scaleX(0.9268);font-size:15.318px;color:#b4b8bd">PIR</div>
<div class="t" style="left:42px;top:176px;transform:translate(0.382px,0.177px) scaleX(0.9657);font-size:15.129px;color:#b4b8bd">I/O</div>
<div class="t" style="left:42px;top:227px;transform:translate(0.423px,0.107px) scaleX(0.9529);font-size:15.464px;color:#b4b8bd">Intelligent</div>
<div class="t" style="left:42px;top:278px;transform:translate(0.588px,0.520px) scaleX(0.9602);font-size:15.38px;color:#468bd0">PTZ Linkage</div>
<div class="t" style="left:42px;top:330px;transform:translate(0.955px,0.778px) scaleX(0.9679);font-size:15.323px;color:#b4b8bd">Exception</div>
<div class="t" style="left:43px;top:383px;transform:translate(0.106px,0.717px) scaleX(0.9104);font-size:15.749px;color:#b4b8bd">Alarm Schedule</div>
<div class="t" style="left:225px;top:62px;transform:translate(0.608px,0.198px) scaleX(1.0635);font-size:13.272px;color:#3a80c8">PTZ Linkage</div>
<div class="t" style="left:217px;top:129px;transform:translate(0.044px,0.882px) scaleX(1.0746);font-size:12.526px;color:#bfc4ca">Channel</div>
<div class="t" style="left:330px;top:129px;transform:translate(0.277px,0.657px) scaleX(1.0711);font-size:12.393px;color:#bfc4ca">Switch</div>
<div class="t" style="left:451px;top:129px;transform:translate(0.413px,0.831px) scaleX(1.0285);font-size:12.592px;color:#bfc4ca">Motion</div>
<div class="t" style="left:584px;top:129px;transform:translate(0.287px,0.886px) scaleX(1.0995);font-size:12.666px;color:#bfc4ca">IO</div>
<div class="t" style="left:701px;top:129px;transform:translate(0.571px,0.798px) scaleX(1.0517);font-size:12.666px;color:#bfc4ca">PIR</div>
<div class="t" style="left:816px;top:129px;transform:translate(0.538px,0.929px) scaleX(1.0882);font-size:12.627px;color:#bfc4ca">PTZ1</div>
<div class="t" style="left:936px;top:129px;transform:translate(0.537px,0.923px) scaleX(1.1527);font-size:12.606px;color:#bfc4ca">PTZ2</div>
<div class="t" style="left:1058px;top:129px;transform:translate(0.513px,0.812px) scaleX(1.1204);font-size:12.665px;color:#bfc4ca">PTZ3</div>
<div class="t" style="left:1178px;top:129px;transform:translate(0.416px,0.751px) scaleX(1.1461);font-size:12.637px;color:#bfc4ca">PTZ4</div>
<div class="t" style="left:229px;top:170px;transform:translate(0.219px,0.633px) scaleX(1.0560);font-size:11.419px;color:#c3c6c9">CH1</div>
<div class="t" style="left:229px;top:207px;transform:translate(0.219px,0.633px) scaleX(1.0560);font-size:11.419px;color:#c3c6c9">CH2</div>
<div class="t" style="left:229px;top:244px;transform:translate(0.219px,0.633px) scaleX(1.0560);font-size:11.419px;color:#c3c6c9">CH3</div>
<div class="t" style="left:229px;top:281px;transform:translate(0.219px,0.633px) scaleX(1.0560);font-size:11.419px;color:#c3c6c9">CH4</div>
<div class="t" style="left:229px;top:318px;transform:translate(0.219px,0.633px) scaleX(1.0560);font-size:11.419px;color:#c3c6c9">CH5</div>
<div class="t" style="left:229px;top:355px;transform:translate(0.219px,0.633px) scaleX(1.0560);font-size:11.419px;color:#c3c6c9">CH6</div>
<div class="t" style="left:229px;top:392px;transform:translate(0.219px,0.633px) scaleX(1.0560);font-size:11.419px;color:#c3c6c9">CH7</div>
<div class="t" style="left:229px;top:429px;transform:translate(0.219px,0.633px) scaleX(1.0560);font-size:11.419px;color:#c3c6c9">CH8</div>
<div class="t" style="left:853px;top:168px;transform:translate(0.269px,0.768px) scaleX(1.0546);font-size:12.752px;color:#c8cbce">OFF</div>
<div class="t" style="left:974px;top:168px;transform:translate(0.269px,0.768px) scaleX(1.0546);font-size:12.752px;color:#c8cbce">OFF</div>
<div class="t" style="left:1095px;top:168px;transform:translate(0.269px,0.768px) scaleX(1.0546);font-size:12.752px;color:#c8cbce">OFF</div>
<div class="t" style="left:1216px;top:168px;transform:translate(0.269px,0.768px) scaleX(1.0546);font-size:12.752px;color:#c8cbce">OFF</div>
<div class="t" style="left:853px;top:205px;transform:translate(0.269px,0.768px) scaleX(1.0546);font-size:12.752px;color:#c8cbce">OFF</div>
<div class="t" style="left:974px;top:205px;transform:translate(0.269px,0.768px) scaleX(1.0546);font-size:12.752px;color:#c8cbce">OFF</div>
<div class="t" style="left:1095px;top:205px;transform:translate(0.269px,0.768px) scaleX(1.0546);font-size:12.752px;color:#c8cbce">OFF</div>
<div class="t" style="left:1216px;top:205px;transform:translate(0.269px,0.768px) scaleX(1.0546);font-size:12.752px;color:#c8cbce">OFF</div>
<div class="t" style="left:853px;top:242px;transform:translate(0.269px,0.768px) scaleX(1.0546);font-size:12.752px;color:#c8cbce">OFF</div>
<div class="t" style="left:974px;top:242px;transform:translate(0.269px,0.768px) scaleX(1.0546);font-size:12.752px;color:#c8cbce">OFF</div>
<div class="t" style="left:1095px;top:242px;transform:translate(0.269px,0.768px) scaleX(1.0546);font-size:12.752px;color:#c8cbce">OFF</div>
<div class="t" style="left:1216px;top:242px;transform:translate(0.269px,0.768px) scaleX(1.0546);font-size:12.752px;color:#c8cbce">OFF</div>
<div class="t" style="left:853px;top:279px;transform:translate(0.269px,0.768px) scaleX(1.0546);font-size:12.752px;color:#c8cbce">OFF</div>
<div class="t" style="left:974px;top:279px;transform:translate(0.269px,0.768px) scaleX(1.0546);font-size:12.752px;color:#c8cbce">OFF</div>
<div class="t" style="left:1095px;top:279px;transform:translate(0.269px,0.768px) scaleX(1.0546);font-size:12.752px;color:#c8cbce">OFF</div>
<div class="t" style="left:1216px;top:279px;transform:translate(0.269px,0.768px) scaleX(1.0546);font-size:12.752px;color:#c8cbce">OFF</div>
<div class="t" style="left:853px;top:316px;transform:translate(0.269px,0.768px) scaleX(1.0546);font-size:12.752px;color:#c8cbce">OFF</div>
<div class="t" style="left:974px;top:316px;transform:translate(0.269px,0.768px) scaleX(1.0546);font-size:12.752px;color:#c8cbce">OFF</div>
<div class="t" style="left:1095px;top:316px;transform:translate(0.269px,0.768px) scaleX(1.0546);font-size:12.752px;color:#c8cbce">OFF</div>
<div class="t" style="left:1216px;top:316px;transform:translate(0.269px,0.768px) scaleX(1.0546);font-size:12.752px;color:#c8cbce">OFF</div>
<div class="t" style="left:853px;top:353px;transform:translate(0.269px,0.768px) scaleX(1.0546);font-size:12.752px;color:#c8cbce">OFF</div>
<div class="t" style="left:974px;top:353px;transform:translate(0.269px,0.768px) scaleX(1.0546);font-size:12.752px;color:#c8cbce">OFF</div>
<div class="t" style="left:1095px;top:353px;transform:translate(0.269px,0.768px) scaleX(1.0546);font-size:12.752px;color:#c8cbce">OFF</div>
<div class="t" style="left:1216px;top:353px;transform:translate(0.269px,0.768px) scaleX(1.0546);font-size:12.752px;color:#c8cbce">OFF</div>
<div class="t" style="left:853px;top:390px;transform:translate(0.269px,0.768px) scaleX(1.0546);font-size:12.752px;color:#c8cbce">OFF</div>
<div class="t" style="left:974px;top:390px;transform:translate(0.269px,0.768px) scaleX(1.0546);font-size:12.752px;color:#c8cbce">OFF</div>
<div class="t" style="left:1095px;top:390px;transform:translate(0.269px,0.768px) scaleX(1.0546);font-size:12.752px;color:#c8cbce">OFF</div>
<div class="t" style="left:1216px;top:390px;transform:translate(0.269px,0.768px) scaleX(1.0546);font-size:12.752px;color:#c8cbce">OFF</div>
<div class="t" style="left:853px;top:427px;transform:translate(0.269px,0.768px) scaleX(1.0546);font-size:12.752px;color:#c8cbce">OFF</div>
<div class="t" style="left:974px;top:427px;transform:translate(0.269px,0.768px) scaleX(1.0546);font-size:12.752px;color:#c8cbce">OFF</div>
<div class="t" style="left:1095px;top:427px;transform:translate(0.269px,0.768px) scaleX(1.0546);font-size:12.752px;color:#c8cbce">OFF</div>
<div class="t" style="left:1216px;top:427px;transform:translate(0.269px,0.768px) scaleX(1.0546);font-size:12.752px;color:#c8cbce">OFF</div>
<div class="t" style="left:1047px;top:985px;transform:translate(0.543px,0.864px) scaleX(0.9295);font-size:16.506px;color:#bcc0c5">Copy</div>
<div class="t" style="left:1119px;top:985px;transform:translate(0.611px,0.935px) scaleX(1.0277);font-size:15.463px;color:#bcc0c5">Default</div>
<div class="t" style="left:1207px;top:986px;transform:translate(0.309px,0.034px) scaleX(0.9260);font-size:15.705px;color:#bcc0c5">Apply</div>
</div></body></html>
